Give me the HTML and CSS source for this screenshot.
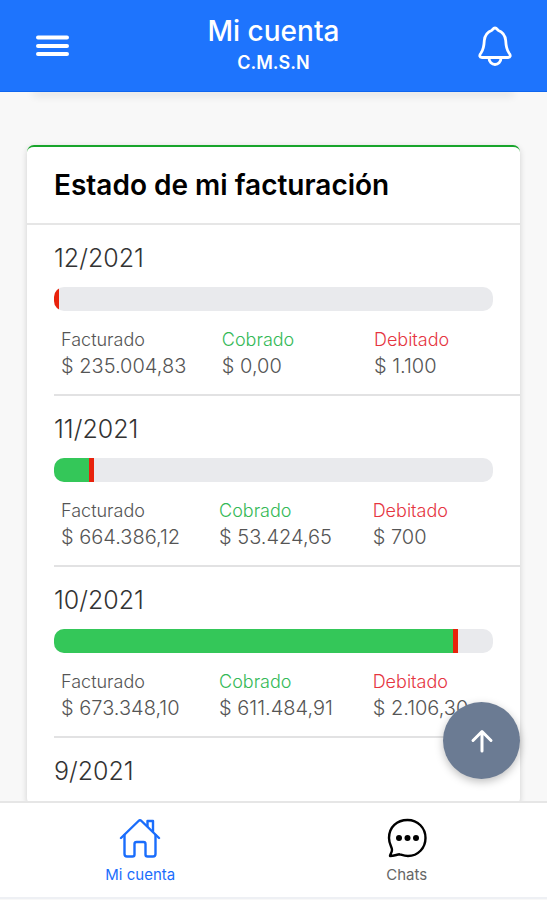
FILE: index.html
```html
<!DOCTYPE html>
<html lang="es">
<head>
  <meta charset="UTF-8" />
  <meta name="viewport" content="width=device-width, initial-scale=1.0"/>
  <title>Mi cuenta</title>
  <link rel="stylesheet" href="styles.css">
</head>
<body>

  <!-- Header -->
  <header class="toolbar">
    <button class="icon-button" type="button" aria-label="Menú">
      <svg width="34" height="34" viewBox="0 0 34 34" fill="none" stroke="currentColor" stroke-width="4" stroke-linecap="round">
        <path d="M3 8.500H32M3 17H32M3 25H32"/>
      </svg>
    </button>
    <div class="toolbar-title">
      <h1>Mi cuenta</h1>
      <p>C.M.S.N</p>
    </div>
    <button class="icon-button" type="button" aria-label="Notificaciones">
      <svg width="34" height="40" viewBox="0 0 34 40" fill="none" stroke="currentColor" stroke-width="2.800" stroke-linecap="round" stroke-linejoin="round">
        <path d="M17 2C15.500 2 15 3 14 4.200C9 6 6.700 10 6.300 14.500C6 21 5.200 24 3 27C1 29.500 1.500 31.500 4 31.500H30C32.500 31.500 33 29.500 31 27C28.800 24 28 21 27.700 14.500C27.300 10 25 6 20 4.200C19 3 18.500 2 17 2Z"/>
        <path d="M11 32C11 36 14 38.500 17 38.500S23 36 23 32"/>
      </svg>
    </button>
  </header>

  <!-- Content -->
  <div class="content">
    <main class="scroll">
      <div class="card-end"></div>

      <section class="card">
        <h2>Estado de mi facturación</h2>

        <article class="month">
          <h3>12/2021</h3>
          <div class="bar">
            <div class="bar-paid" style="width: 0%"></div>
            <div class="bar-debit"></div>
          </div>
          <table class="amounts amounts-wide">
            <tr><th>Facturado</th><th class="paid">Cobrado</th><th class="debit">Debitado</th></tr>
            <tr><td>$ 235.004,83</td><td>$ 0,00</td><td>$ 1.100</td></tr>
          </table>
        </article>

        <article class="month">
          <h3>11/2021</h3>
          <div class="bar">
            <div class="bar-paid" style="width: 8%"></div>
            <div class="bar-debit"></div>
          </div>
          <table class="amounts">
            <tr><th>Facturado</th><th class="paid">Cobrado</th><th class="debit">Debitado</th></tr>
            <tr><td>$ 664.386,12</td><td>$ 53.424,65</td><td>$ 700</td></tr>
          </table>
        </article>

        <article class="month">
          <h3>10/2021</h3>
          <div class="bar">
            <div class="bar-paid" style="width: 90.8%"></div>
            <div class="bar-debit"></div>
          </div>
          <table class="amounts">
            <tr><th>Facturado</th><th class="paid">Cobrado</th><th class="debit">Debitado</th></tr>
            <tr><td>$ 673.348,10</td><td>$ 611.484,91</td><td>$ 2.106,30</td></tr>
          </table>
        </article>

        <article class="month">
          <h3>9/2021</h3>
        </article>
      </section>
    </main>

    <button class="fab" type="button" aria-label="Subir">
      <svg width="24" height="24" viewBox="0 0 24 24" fill="none" stroke="currentColor" stroke-width="3" stroke-linecap="round" stroke-linejoin="round">
        <path d="M3 11.500L12 2.500L21 11.500M12 3V22"/>
      </svg>
    </button>
  </div>

  <!-- Tabs -->
  <nav class="tabs">
    <a class="tab active" href="#cuenta">
      <svg width="42" height="40" viewBox="0 0 42 40" fill="none" stroke="currentColor" stroke-width="2.400" stroke-linecap="round" stroke-linejoin="round">
        <path d="M2 20L19.500 3Q21 1.500 22.500 3L40 20"/>
        <path d="M5.500 17V36Q5.500 38.500 8 38.500H13.500Q15.500 38.500 15.500 36.500V26Q15.500 24 17.500 24H24.500Q26.500 24 26.500 26V36.500Q26.500 38.500 28.500 38.500H34Q36.500 38.500 36.500 36V17"/>
        <path d="M28.500 8V3H34V13.500"/>
      </svg>
      <span>Mi cuenta</span>
    </a>
    <a class="tab" href="#chats">
      <svg width="40" height="40" viewBox="0 0 40 40" fill="none" stroke="#000" stroke-width="2.400" stroke-linecap="round" stroke-linejoin="round">
        <path d="M2 20C2 9 10 2 20.500 2S38.500 10 38.500 20S31 38 21 38C17.500 38 15 37 12.500 36.300C10 36.500 7 38 3 38C2.500 37 5 35 5 32C5 29 2 26 2 20Z"/>
        <g fill="#000" stroke="none">
          <circle cx="12" cy="20" r="3"/>
          <circle cx="20.500" cy="20" r="3"/>
          <circle cx="29" cy="20" r="3"/>
        </g>
      </svg>
      <span>Chats</span>
    </a>
  </nav>

</body>
</html>
```
FILE: styles.css
```css
* {
  box-sizing: border-box;
}

body {
  margin: 0;
  height: 100vh;
  display: flex;
  flex-direction: column;
  background-color: #f8f8f8;
  font-family: Inter, "Liberation Sans", sans-serif;
}

h1, h2, h3, p {
  margin: 0;
}

button {
  border: 0;
  padding: 0;
  background: none;
  color: white;
  cursor: pointer;
}

svg {
  display: block;
}

/* Header */
.toolbar {
  position: relative;
  z-index: 1;
  display: flex;
  align-items: center;
  justify-content: space-between;
  height: 92px;
  padding: 0 35px;
  background-color: #1e74fd;
  border-bottom: 1px solid #0f66ef;
  color: white;
}

.toolbar-title {
  text-align: center;
}

.toolbar-title h1 {
  font-size: 28px;
  font-weight: 500;
  line-height: 34px;
}

.toolbar-title p {
  font-size: 18px;
  font-weight: 600;
  line-height: 30px;
}

/* Content */
.content {
  position: relative;
  flex: 1;
  min-height: 0;
}

.scroll {
  height: 100%;
  padding-bottom: 27px;
  overflow-y: auto;
  scrollbar-width: none;
}

.card-end {
  margin: 0 35px 53px;
  box-shadow: 0 1px 8px 2px rgba(0, 0, 0, 0.14);
}

.card {
  margin: 0 27px;
  background-color: white;
  border-top: 2px solid #18a52b;
  border-radius: 7px;
  box-shadow: 0 2px 6px rgba(0, 0, 0, 0.16);
}

.card h2 {
  padding: 19px 27px;
  border-bottom: 2px solid #e6e6e6;
  font-size: 28px;
  font-weight: 600;
  line-height: 38px;
}

.month {
  margin-left: 27px;
  padding: 14px 27px 15px 0;
  border-bottom: 2px solid #e2e2e3;
}

.month:last-child {
  border-bottom: 0;
}

.month h3 {
  color: #333;
  font-size: 25px;
  font-weight: 300;
  line-height: 38px;
}

.bar {
  display: flex;
  height: 24px;
  margin: 10px 0 16px;
  border-radius: 10px;
  background-color: #e9eaed;
  overflow: hidden;
}

.bar-paid {
  background-color: #34c759;
}

.bar-debit {
  width: 5px;
  background-color: #e8220c;
}

.amounts {
  width: 100%;
  table-layout: fixed;
  border-collapse: collapse;
  color: #555;
  line-height: 26px;
  text-align: left;
  white-space: nowrap;
}

.amounts th,
.amounts td {
  padding: 0 0 0 7px;
  font-weight: 300;
}

.amounts th {
  width: 29%;
  font-size: 18px;
}

.amounts td {
  font-size: 20px;
}

.amounts th:first-child {
  width: 36%;
}

.amounts th:nth-child(2) {
  width: 35%;
}

.amounts-wide th:first-child {
  width: 37%;
}

.amounts .paid {
  color: #34b957;
}

.amounts .debit {
  color: #e5353f;
}

.fab {
  position: absolute;
  right: 27px;
  bottom: 22px;
  display: flex;
  align-items: center;
  justify-content: center;
  width: 77px;
  height: 77px;
  border-radius: 50%;
  background-color: #6b7b93;
  box-shadow: 0 3px 8px rgba(0, 0, 0, 0.25);
}

/* Tabs */
.tabs {
  display: flex;
  height: 98px;
  margin-bottom: 1px;
  padding: 2px 7px 0;
  background-color: white;
  border-top: 2px solid #e6e6e6;
  border-bottom: 2px solid #eef0f4;
}

.tab {
  flex: 1;
  display: flex;
  flex-direction: column;
  align-items: center;
  justify-content: center;
  gap: 7px;
  color: #666;
  font-size: 15px;
  line-height: 20px;
  text-decoration: none;
}

.tab.active {
  color: #1a6dfc;
}
```
